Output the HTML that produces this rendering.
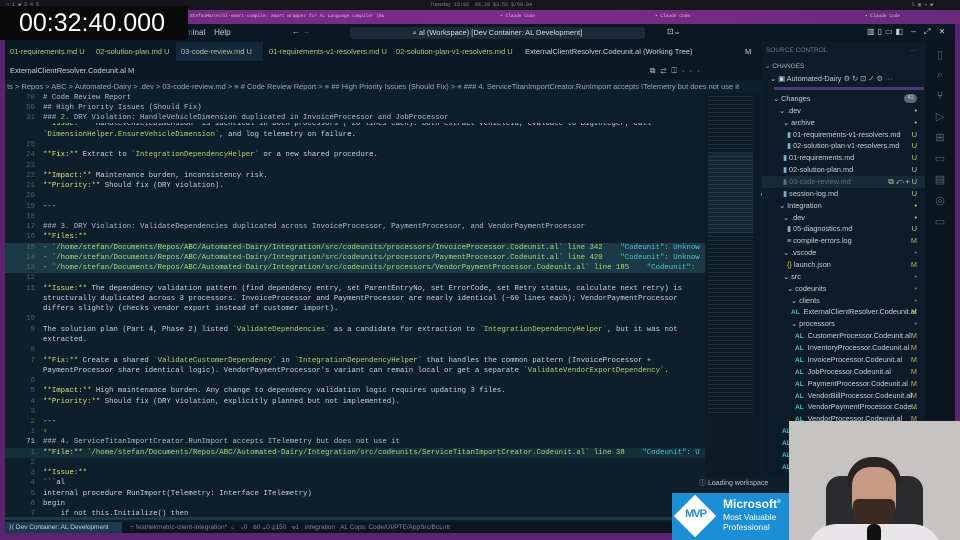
<!DOCTYPE html>
<html><head><meta charset="utf-8"><style>
*{margin:0;padding:0;box-sizing:border-box}
body{width:960px;height:540px;overflow:hidden;background:#5b2470;font-family:"Liberation Sans",sans-serif;position:relative}
.abs{position:absolute}
#top{left:0;top:0;width:960px;height:10px;background:#17161c;color:#888;font:5px "Liberation Mono",monospace}
#strip{left:0;top:10px;width:960px;height:14px;background:linear-gradient(90deg,#6d2a7c,#7a2e88 50%,#6a2a7a);color:#d8b8e0;font:4.5px "Liberation Mono",monospace}
#win{left:5px;top:24px;width:950px;height:509px;background:#0e1e2b;overflow:hidden}
#title{left:0;top:0;width:950px;height:18px;background:#0b1823;color:#c8d0d8;font-size:8px}
#search{left:345px;top:3px;width:295px;height:12px;background:#1a2a36;border-radius:3px;color:#d8dee4;font-size:7.5px;text-align:center;line-height:12px}
.tabs{left:0;height:19px;background:#0b1823;font-size:7.5px;color:#a9cf7c;white-space:nowrap}
.tab{position:absolute;top:0;height:19px;line-height:19px;padding-left:5px}
#bc{left:0;top:56px;width:757px;height:13px;color:#9aa6b0;font-size:7.5px;line-height:13px;white-space:nowrap;overflow:hidden}
#ed{left:0;top:69px;width:700px;height:427px;overflow:hidden;font:7.35px "Liberation Mono",monospace;color:#c8d2da}
.ln{position:absolute;left:0;width:700px;height:10.3px;line-height:10.3px;white-space:pre}
.n{position:absolute;left:8px;width:22px;text-align:right;color:#4d6070}
.t{position:absolute;left:38px}
.h{color:#a9bcd8}
.b{color:#d9e27a}
.c{color:#a6d97a}
.p{color:#a6d97a}
.hl{background:#1b3a45}
.k{color:#4fc3d6}
#mm{left:700px;top:69px;width:55px;height:427px;background:#0c1b26}
#sb{left:757px;top:18px;width:163px;height:480px;background:#0d1c28;color:#c6d0d8;font-size:7.3px}
.r{position:absolute;height:11.8px;line-height:11.8px;white-space:nowrap;left:0;width:163px}
.s{position:absolute;right:8px;top:0}
.u{color:#b8d38a}
.m{color:#c6a86a}
.al{color:#4ec9b0;font-weight:bold;font-size:6.5px;margin-right:4px}
#act{left:920px;top:18px;width:30px;height:491px;background:#0a1620}
#status{left:0;top:498px;width:950px;height:11px;background:#0a1620;color:#7c8a96;font-size:6.5px;line-height:11px;white-space:nowrap}
</style></head><body>
<div id="top" class="abs"><span style="position:absolute;left:6px;top:2px">▢ 1 ■ 3 4 5</span><span style="position:absolute;left:430px;top:2px">Tuesday 15:02 &nbsp;6%.20 $3.55 $/60.04</span><span style="position:absolute;left:912px;top:2px">C ▣ ◂ ■</span></div>
<div id="strip" class="abs"><span style="position:absolute;left:190px;top:4px">StefanMaron/al-smart-compile: Smart wrapper for AL Language compiler (Bu</span><span style="position:absolute;left:500px;top:4px">• Claude Code</span><span style="position:absolute;left:655px;top:4px">• Claude Code</span><span style="position:absolute;left:865px;top:4px">• Claude Code</span></div>

<div id="win" class="abs">
 <div id="title" class="abs">
  <span style="position:absolute;left:8px;top:3px;color:#3fa0e0;font-size:9px">⋈</span>
  <span style="position:absolute;left:28px;top:4px;color:#6c7882;white-space:nowrap">File &nbsp; Edit &nbsp; Selection &nbsp; View &nbsp; Go &nbsp; Run &nbsp; Term<span style="color:#c8d0d8">inal &nbsp;&nbsp; Help</span></span>
  <span style="position:absolute;left:287px;top:3px">← <span style="color:#55606a">→</span></span>
  <div id="search" class="abs">⌕ al (Workspace) [Dev Container: AL Development]</div>
  <span style="position:absolute;left:662px;top:3px">⊡⌄</span>
  <span style="position:absolute;left:862px;top:3px;letter-spacing:3px">▥▯▭◧ – ⤢ ✕</span>
 </div>
 <div class="abs tabs" style="top:18px;width:757px">
  <div class="tab" style="left:0">01-requirements.md U</div>
  <div class="tab" style="left:86px">02-solution-plan.md U</div>
  <div class="tab" style="left:171px;width:87px;background:#13283a;color:#b0c4a0">03-code-review.md U</div>
  <div class="tab" style="left:259px">01-requirements-v1-resolvers.md U</div>
  <div class="tab" style="left:386px">02-solution-plan-v1-resolvers.md U</div>
  <div class="tab" style="left:515px;color:#c6d0d8">ExternalClientResolver.Codeunit.al (Working Tree)</div>
  <div class="tab" style="left:735px;color:#c6d0d8">M</div>
 </div>
 <div class="abs tabs" style="top:37px;width:757px;color:#c6d0d8">
  <div class="tab" style="left:0">ExternalClientResolver.Codeunit.al M</div>
  <div class="tab" style="left:640px;letter-spacing:5px">⧉⇄◫···</div>
 </div>
 <div id="bc" class="abs">&nbsp;ts &gt; Repos &gt; ABC &gt; Automated-Dairy &gt; .dev &gt; 03-code-review.md &gt; ≡ # Code Review Report &gt; ≡ ## High Priority Issues (Should Fix) &gt; ≡ ### 4. ServiceTitanImportCreator.RunImport accepts ITelemetry but does not use it</div>

 <div id="ed" class="abs">
  <div class="ln" style="top:30px;height:4px;overflow:hidden"><span class="t" style="top:-4px"><span class="b">**Issue:**</span> `HandleVehicleDimension` is identical in both processors (~20 lines each). Both extract VehicleId, evaluate to BigInteger, call</span></div>
  <div class="ln" style="top:0"><span class="n">70</span><span class="t h"># Code Review Report</span></div>
  <div class="ln" style="top:10px"><span class="n">50</span><span class="t h">## High Priority Issues (Should Fix)</span></div>
  <div class="ln" style="top:20px"><span class="n">31</span><span class="t h">### 2. DRY Violation: HandleVehicleDimension duplicated in InvoiceProcessor and JobProcessor</span></div>
  <div class="ln" style="top:37px"><span class="t"><span class="c">`DimensionHelper.EnsureVehicleDimension`</span>, and log telemetry on failure.</span></div>
  <div class="ln" style="top:47px"><span class="n">25</span></div>
  <div class="ln" style="top:57px"><span class="n">24</span><span class="t"><span class="b">**Fix:**</span> Extract to <span class="c">`IntegrationDependencyHelper`</span> or a new shared procedure.</span></div>
  <div class="ln" style="top:68px"><span class="n">23</span></div>
  <div class="ln" style="top:78px"><span class="n">22</span><span class="t"><span class="b">**Impact:**</span> Maintenance burden, inconsistency risk.</span></div>
  <div class="ln" style="top:88px"><span class="n">21</span><span class="t"><span class="b">**Priority:**</span> Should fix (DRY violation).</span></div>
  <div class="ln" style="top:98px"><span class="n">20</span></div>
  <div class="ln" style="top:109px"><span class="n">19</span><span class="t">---</span></div>
  <div class="ln" style="top:119px"><span class="n">18</span></div>
  <div class="ln" style="top:129px"><span class="n">17</span><span class="t h">### 3. DRY Violation: ValidateDependencies duplicated across InvoiceProcessor, PaymentProcessor, and VendorPaymentProcessor</span></div>
  <div class="ln" style="top:139px"><span class="n">16</span><span class="t b">**Files:**</span></div>
  <div class="ln hl" style="top:150px"><span class="n">15</span><span class="t p">- `/home/stefan/Documents/Repos/ABC/Automated-Dairy/Integration/src/codeunits/processors/InvoiceProcessor.Codeunit.al` line 342    <span class="k">"Codeunit": Unknow</span></span></div>
  <div class="ln hl" style="top:160px"><span class="n">14</span><span class="t p">- `/home/stefan/Documents/Repos/ABC/Automated-Dairy/Integration/src/codeunits/processors/PaymentProcessor.Codeunit.al` line 420    <span class="k">"Codeunit": Unknow</span></span></div>
  <div class="ln hl" style="top:170px"><span class="n">13</span><span class="t p">- `/home/stefan/Documents/Repos/ABC/Automated-Dairy/Integration/src/codeunits/processors/VendorPaymentProcessor.Codeunit.al` line 185    <span class="k">"Codeunit":</span></span></div>
  <div class="ln" style="top:180px"><span class="n">12</span></div>
  <div class="ln" style="top:191px"><span class="n">11</span><span class="t"><span class="b">**Issue:**</span> The dependency validation pattern (find dependency entry, set ParentEntryNo, set ErrorCode, set Retry status, calculate next retry) is</span></div>
  <div class="ln" style="top:201px"><span class="t">structurally duplicated across 3 processors. InvoiceProcessor and PaymentProcessor are nearly identical (~60 lines each); VendorPaymentProcessor</span></div>
  <div class="ln" style="top:211px"><span class="t">differs slightly (checks vendor export instead of customer import).</span></div>
  <div class="ln" style="top:221px"><span class="n">10</span></div>
  <div class="ln" style="top:232px"><span class="n">9</span><span class="t">The solution plan (Part 4, Phase 2) listed <span class="c">`ValidateDependencies`</span> as a candidate for extraction to <span class="c">`IntegrationDependencyHelper`</span>, but it was not</span></div>
  <div class="ln" style="top:242px"><span class="t">extracted.</span></div>
  <div class="ln" style="top:252px"><span class="n">8</span></div>
  <div class="ln" style="top:263px"><span class="n">7</span><span class="t"><span class="b">**Fix:**</span> Create a shared <span class="c">`ValidateCustomerDependency`</span> in <span class="c">`IntegrationDependencyHelper`</span> that handles the common pattern (InvoiceProcessor +</span></div>
  <div class="ln" style="top:273px"><span class="t">PaymentProcessor share identical logic). VendorPaymentProcessor's variant can remain local or get a separate <span class="c">`ValidateVendorExportDependency`</span>.</span></div>
  <div class="ln" style="top:283px"><span class="n">6</span></div>
  <div class="ln" style="top:293px"><span class="n">5</span><span class="t"><span class="b">**Impact:**</span> High maintenance burden. Any change to dependency validation logic requires updating 3 files.</span></div>
  <div class="ln" style="top:304px"><span class="n">4</span><span class="t"><span class="b">**Priority:**</span> Should fix (DRY violation, explicitly planned but not implemented).</span></div>
  <div class="ln" style="top:314px"><span class="n">3</span></div>
  <div class="ln" style="top:324px"><span class="n">2</span><span class="t">---</span></div>
  <div class="ln" style="top:334px"><span class="n">1</span><span class="t" style="color:#e0c040">♀</span></div>
  <div class="ln" style="top:344px"><span class="n" style="color:#c8d2da">71</span><span class="t h">### 4. ServiceTitanImportCreator.RunImport accepts ITelemetry but does not use it</span></div>
  <div class="ln hl" style="top:355px;background:#13303a"><span class="n">1</span><span class="t p"><span class="b">**File:**</span> `/home/stefan/Documents/Repos/ABC/Automated-Dairy/Integration/src/codeunits/ServiceTitanImportCreator.Codeunit.al` line 38    <span class="k">"Codeunit": U</span></span></div>
  <div class="ln" style="top:365px"><span class="n">2</span></div>
  <div class="ln" style="top:375px"><span class="n">3</span><span class="t b">**Issue:**</span></div>
  <div class="ln" style="top:385px"><span class="n">4</span><span class="t">&#96;&#96;&#96;al</span></div>
  <div class="ln" style="top:396px"><span class="n">5</span><span class="t">internal procedure RunImport(Telemetry: Interface ITelemetry)</span></div>
  <div class="ln" style="top:406px"><span class="n">6</span><span class="t">begin</span></div>
  <div class="ln" style="top:416px"><span class="n">7</span><span class="t">    if not this.Initialize() then</span></div>
  <div class="ln" style="top:424px;height:3px;background:#1b3a45"></div>
 </div>
 <div id="mm" class="abs">
  <div class="abs" style="left:3px;top:3px;width:45px;height:320px;background:repeating-linear-gradient(#2e3f4c 0 1px,transparent 1px 4px);opacity:.6"></div>
  <div class="abs" style="left:3px;top:60px;width:45px;height:80px;background:rgba(80,120,160,.12)"></div>
  <div class="abs" style="left:56px;top:100px;width:3px;height:3px;background:#4a7ac0"></div>
 </div>

 <div id="sb" class="abs">
  <div class="r" style="top:0;height:18px;line-height:18px;color:#6e7a84;font-size:6.5px;padding-left:4px">SOURCE CONTROL<span class="s">···</span></div>
  <div class="r" style="top:19px;font-size:6.5px;color:#aab4bc;padding-left:3px">⌄ CHANGES</div>
  <div class="r" style="top:31px;padding-left:8px">⌄ ▣ Automated-Dairy <span style="color:#aab">⚙ ↻ ⊡ ✓ ⚙ ···</span></div>
  <div class="abs" style="left:12px;top:45px;width:150px;height:3px;background:#4b3a78"></div>
  <div class="r" style="top:51px;padding-left:11px">⌄ Changes<span class="s" style="background:#5a6a78;border-radius:5px;padding:0 3px;line-height:9px;top:1px;font-size:6px">42</span></div>
  <div class="r" style="top:63px;padding-left:17px">⌄ .dev<span class="s u">•</span></div>
  <div class="r" style="top:75px;padding-left:21px">⌄ archive<span class="s u">•</span></div>
  <div class="r" style="top:87px;padding-left:25px"><span style="color:#7fb0c8">▮</span> 01-requirements-v1-resolvers.md<span class="s u">U</span></div>
  <div class="r" style="top:98px;padding-left:25px"><span style="color:#7fb0c8">▮</span> 02-solution-plan-v1-resolvers.md<span class="s u">U</span></div>
  <div class="r" style="top:110px;padding-left:21px"><span style="color:#7fb0c8">▮</span> 01-requirements.md<span class="s u">U</span></div>
  <div class="r" style="top:122px;padding-left:21px"><span style="color:#7fb0c8">▮</span> 02-solution-plan.md<span class="s u">U</span></div>
  <div class="r" style="top:134px;padding-left:21px;background:#18293a;color:#5e6e7c"><span>▮</span> 03-code-review.md<span class="s u">⧉ ↶ + U</span></div>
  <div class="r" style="top:146px;padding-left:21px"><span style="color:#7fb0c8">▮</span> session-log.md<span class="s u">U</span></div>
  <div class="r" style="top:158px;padding-left:17px">⌄ Integration<span class="s u">•</span></div>
  <div class="r" style="top:170px;padding-left:21px">⌄ .dev<span class="s u">•</span></div>
  <div class="r" style="top:181px;padding-left:25px"><span style="color:#7fb0c8">▮</span> 05-diagnostics.md<span class="s u">U</span></div>
  <div class="r" style="top:193px;padding-left:25px">≡ compile-errors.log<span class="s m">M</span></div>
  <div class="r" style="top:205px;padding-left:21px">⌄ .vscode<span class="s" style="color:#777">•</span></div>
  <div class="r" style="top:217px;padding-left:25px"><span style="color:#e0c040">{}</span> launch.json<span class="s m">M</span></div>
  <div class="r" style="top:229px;padding-left:21px">⌄ src<span class="s" style="color:#777">•</span></div>
  <div class="r" style="top:241px;padding-left:25px">⌄ codeunits<span class="s" style="color:#777">•</span></div>
  <div class="r" style="top:253px;padding-left:29px">⌄ clients<span class="s" style="color:#777">•</span></div>
  <div class="r" style="top:264px;padding-left:29px"><span class="al">AL</span>ExternalClientResolver.Codeunit.al<span class="s m">M</span></div>
  <div class="r" style="top:276px;padding-left:29px">⌄ processors<span class="s" style="color:#777">•</span></div>
  <div class="r" style="top:288px;padding-left:33px"><span class="al">AL</span>CustomerProcessor.Codeunit.al<span class="s m">M</span></div>
  <div class="r" style="top:300px;padding-left:33px"><span class="al">AL</span>InventoryProcessor.Codeunit.al<span class="s m">M</span></div>
  <div class="r" style="top:312px;padding-left:33px"><span class="al">AL</span>InvoiceProcessor.Codeunit.al<span class="s m">M</span></div>
  <div class="r" style="top:324px;padding-left:33px"><span class="al">AL</span>JobProcessor.Codeunit.al<span class="s m">M</span></div>
  <div class="r" style="top:336px;padding-left:33px"><span class="al">AL</span>PaymentProcessor.Codeunit.al<span class="s m">M</span></div>
  <div class="r" style="top:348px;padding-left:33px"><span class="al">AL</span>VendorBillProcessor.Codeunit.al<span class="s m">M</span></div>
  <div class="r" style="top:359px;padding-left:33px"><span class="al">AL</span>VendorPaymentProcessor.Code...<span class="s m">M</span></div>
  <div class="r" style="top:371px;padding-left:33px"><span class="al">AL</span>VendorProcessor.Codeunit.al<span class="s m">M</span></div>
  <div class="r" style="top:383px;padding-left:20px"><span class="al">AL</span></div>
  <div class="r" style="top:395px;padding-left:20px"><span class="al">AL</span></div>
  <div class="r" style="top:407px;padding-left:20px"><span class="al">AL</span></div>
  <div class="r" style="top:419px;padding-left:20px"><span class="al">AL</span></div>
 </div>
 <div id="act" class="abs" style="color:#56646e;font-size:11px;text-align:center">
  <div style="margin-top:6px">▯</div><div style="margin-top:8px">⌕</div><div style="margin-top:8px;color:#9aa">⑂</div><div style="margin-top:8px">▷</div><div style="margin-top:8px">⊞</div><div style="margin-top:8px">▭</div><div style="margin-top:8px">▤</div><div style="margin-top:8px">◎</div><div style="margin-top:8px">▭</div>
 </div>
 <div class="abs" style="left:688px;top:453px;width:100px;height:14px;background:#0e1e2b;color:#b8c2ca;font-size:7px;line-height:14px;padding-left:6px">ⓘ Loading workspace</div>
 <div id="status" class="abs"><span style="position:absolute;left:0;top:0;width:117px;height:11px;background:#1a3a4e;color:#c8d4dc;padding-left:4px">⟩⟨ Dev Container: AL Development</span><span style="position:absolute;left:125px">⑂ feat/tekmetric-client-integration* &nbsp;↻ &nbsp; ⇣0 &nbsp; ⊗0 ⚠0 ⓘ150 &nbsp; ⚒1 &nbsp; integration &nbsp; AL Cops: Code/UI/PTE/AppSrc/BcLntr</span></div>
</div>

<div class="abs" style="left:0;top:6px;width:188px;height:34px;background:#0a0a0a;color:#fff;font-size:25px;line-height:34px;padding-left:19px">00:32:40.000</div>

<div class="abs" style="left:672px;top:493px;width:118px;height:47px;background:#1b8fd6;color:#fff">
 <div class="abs" style="left:8px;top:8px;width:30px;height:30px;background:#fff;transform:rotate(45deg)"></div>
 <div class="abs" style="left:8px;top:15px;width:31px;text-align:center;color:#1b8fd6;font-weight:bold;font-size:11px;letter-spacing:-1px">MVP</div>
 <div class="abs" style="left:51px;top:4px;font-size:12px;font-weight:bold;white-space:nowrap">Microsoft<sup style="font-size:5px">®</sup></div>
 <div class="abs" style="left:51px;top:19px;font-size:8.5px;line-height:10px;white-space:nowrap">Most Valuable<br>Professional</div>
</div>

<div class="abs" style="left:789px;top:421px;width:171px;height:119px;background:#c5c4c2;overflow:hidden">
 <div class="abs" style="left:37px;top:55px;width:97px;height:80px;background:#2b2b2d;border-radius:14px"></div>
 <div class="abs" style="left:58px;top:36px;width:54px;height:30px;background:#2a2522;border-radius:25px 25px 5px 5px"></div>
 <div class="abs" style="left:63px;top:46px;width:44px;height:58px;background:#c79a86;border-radius:18px 18px 22px 22px"></div>
 <div class="abs" style="left:64px;top:78px;width:42px;height:32px;background:#3a2a22;border-radius:6px 6px 22px 22px"></div>
 <div class="abs" style="left:18px;top:103px;width:135px;height:30px;background:#e8e6e8;border-radius:40px 40px 0 0"></div>
 <div class="abs" style="left:78px;top:103px;width:14px;height:20px;background:#111;border-radius:6px"></div>
</div>
</body></html>
